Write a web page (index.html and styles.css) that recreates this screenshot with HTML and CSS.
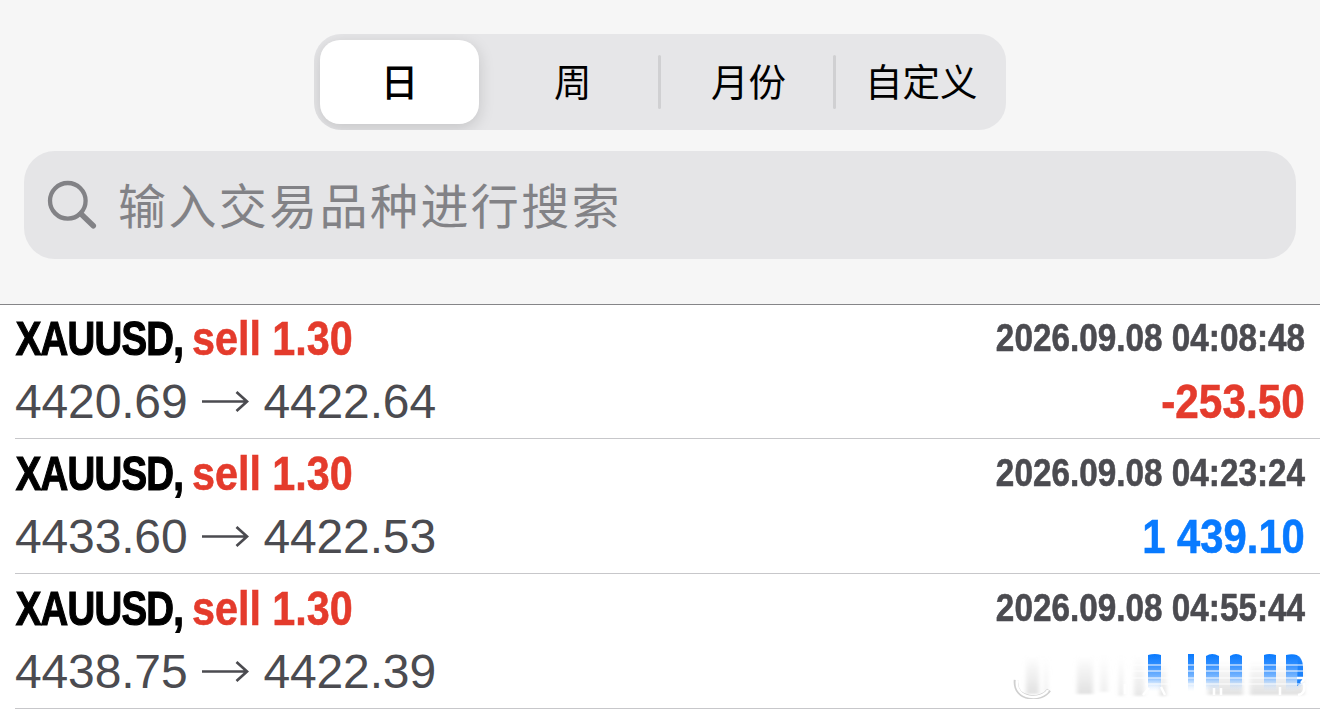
FILE: index.html
```
<!DOCTYPE html>
<html lang="zh-CN">
<head>
    <meta charset="UTF-8">
    <meta name="viewport" content="width=device-width, initial-scale=1.0">
    <title>交易历史</title>
    <link rel="stylesheet" href="styles.css">
</head>
<body>
    <header class="header">
        <div class="tabs">
            <div class="tab active">日</div>
            <div class="tab">周</div>
            <div class="separator"></div>
            <div class="tab month">月份</div>
            <div class="separator"></div>
            <div class="tab">自定义</div>
        </div>
        <div class="search">
            <svg class="search-icon" width="52" height="52" viewBox="0 0 52 52">
                <circle cx="21.8" cy="21.8" r="17.8" />
                <path class="handle" d="M34.8 34.8L47.3 46.8" />
            </svg>
            <span class="placeholder">输入交易品种进行搜索</span>
        </div>
    </header>

    <main class="deals">
        <div class="deal">
            <div class="line">
                <div class="title"><span class="symbol">XAUUSD,</span><span class="sell">sell 1.30</span></div>
                <div class="time">2026.09.08 04:08:48</div>
            </div>
            <div class="line">
                <div class="prices">
                    <span>4420.69</span>
                    <svg class="arrow" width="48" height="26" viewBox="0 0 48 26"><path d="M1 12.5H46M35.5 3L46 12.5L35.5 22" /></svg>
                    <span>4422.64</span>
                </div>
                <div class="profit loss">-253.50</div>
            </div>
        </div>
        <div class="deal">
            <div class="line">
                <div class="title"><span class="symbol">XAUUSD,</span><span class="sell">sell 1.30</span></div>
                <div class="time">2026.09.08 04:23:24</div>
            </div>
            <div class="line">
                <div class="prices">
                    <span>4433.60</span>
                    <svg class="arrow" width="48" height="26" viewBox="0 0 48 26"><path d="M1 12.5H46M35.5 3L46 12.5L35.5 22" /></svg>
                    <span>4422.53</span>
                </div>
                <div class="profit">1 439.10</div>
            </div>
        </div>
        <div class="deal">
            <div class="line">
                <div class="title"><span class="symbol">XAUUSD,</span><span class="sell">sell 1.30</span></div>
                <div class="time">2026.09.08 04:55:44</div>
            </div>
            <div class="line">
                <div class="prices">
                    <span>4438.75</span>
                    <svg class="arrow" width="48" height="26" viewBox="0 0 48 26"><path d="M1 12.5H46M35.5 3L46 12.5L35.5 22" /></svg>
                    <span>4422.39</span>
                </div>
                <!-- smudged amount -->
                <svg class="smudge" width="300" height="54" viewBox="1010 645 300 54">
                    <defs>
                        <linearGradient id="blue" gradientUnits="userSpaceOnUse" x1="0" y1="654" x2="0" y2="692">
                            <stop offset="0" stop-color="#087aff" />
                            <stop offset="0.25" stop-color="#2c8cff" />
                            <stop offset="0.6" stop-color="#78b6ff" />
                            <stop offset="1" stop-color="#e8f2fd" stop-opacity="0" />
                        </linearGradient>
                        <linearGradient id="gray" x1="0" y1="0" x2="0" y2="1">
                            <stop offset="0" stop-color="#dcdcdc" stop-opacity="0" />
                            <stop offset="1" stop-color="#dcdcdc" stop-opacity="0.85" />
                        </linearGradient>
                        <filter id="soft" x="-10%" y="-20%" width="120%" height="140%">
                            <feGaussianBlur stdDeviation="2.2 1.2" />
                        </filter>
                        <filter id="edge" x="-10%" y="-20%" width="120%" height="140%">
                            <feGaussianBlur stdDeviation="0.7" />
                        </filter>
                    </defs>
                    <g fill="url(#gray)" filter="url(#soft)">
                        <rect x="1026" y="656" width="13" height="38" />
                        <rect x="1044" y="656" width="4" height="36" opacity="0.5" />
                        <rect x="1077" y="656" width="16" height="38" />
                        <rect x="1100" y="656" width="8" height="36" opacity="0.5" />
                        <rect x="1119" y="656" width="4" height="40" opacity="0.8" />
                        <rect x="1134" y="656" width="10" height="40" opacity="0.8" />
                        <rect x="1160" y="660" width="6" height="36" />
                        <rect x="1208" y="660" width="35" height="35" />
                        <rect x="1250" y="660" width="54" height="35" />
                    </g>
                    <g fill="url(#blue)" filter="url(#edge)">
                        <path d="M1148 655Q1155 653 1161 655V693H1148Z" />
                        <path d="M1188 654H1194V693H1188Z" />
                        <path d="M1206 656Q1212 652 1219 656V693H1206Z" />
                        <path d="M1230 656Q1236 652 1242 656V693H1230Z" />
                        <path d="M1264 655Q1269 653 1276 655V693H1264Z" />
                        <path d="M1286 655Q1303 651 1303 668V682Q1302 690 1286 693Z" />
                    </g>
                    <path class="tail" filter="url(#edge)" d="M1298 658Q1303 662 1303 669V682L1297 686Z" />
                    <g class="streaks" filter="url(#edge)">
                        <path d="M1125 665H1303M1125 671H1303M1125 678H1303M1145 684H1303" />
                    </g>
                    <g class="mark" filter="url(#edge)">
                        <path class="shade" d="M1016 680C1014 701 1042 701 1049 690" />
                        <path d="M1017 680C1014 700 1042 701 1048 690M1125 694V684M1143 695L1149 688M1161 687L1165 695M1214 688V695M1221 688V695M1280 687V695M1297 678H1305L1301 683M1304 683Q1306 694 1298 695" />
                    </g>
                </svg>
            </div>
        </div>
    </main>
</body>
</html>
```

FILE: styles.css
```
* { box-sizing: border-box; }
body { margin: 0; height: 712px; overflow: hidden; background: #fff; font-family: "Liberation Sans", "Noto Sans CJK SC", sans-serif; }

.header { height: 305px; padding: 34px 24px 0; background: #f6f6f6; border-bottom: 1px solid #858588; }
.tabs { display: flex; align-items: center; width: 692px; height: 96px; margin: 0 auto; padding: 6px 0 6px 6px; background: #e6e6e8; border-radius: 27px; overflow: hidden; }
.tab { display: flex; flex: 1; align-items: center; justify-content: center; height: 84px; padding-bottom: 5px; font-family: "Noto Sans CJK SC", sans-serif; font-size: 37.5px; line-height: 50px; color: #000; }
.tab.active { flex: none; width: 159px; margin-right: 9px; background: #fff; border-radius: 20px; box-shadow: 0 4px 16px rgba(0, 0, 0, 0.15); font-weight: 500; }
.tab.month { padding-left: 3px; }
.separator { width: 3px; height: 54px; background: #d0d0d2; border-radius: 2px; }

.search { display: flex; align-items: center; height: 108px; margin-top: 21px; padding-left: 22px; background: #e5e5e7; border-radius: 31px; }
.search-icon { margin-right: 20px; fill: none; stroke: #828286; stroke-width: 4.3; stroke-linecap: round; }
.search-icon .handle { stroke-width: 5.5; }
.placeholder { padding-bottom: 4px; font-family: "Noto Sans CJK SC", sans-serif; font-size: 48px; line-height: 70px; letter-spacing: 2.4px; color: #828286; }

.deals { padding-left: 15px; }
.deal { height: 135px; padding: 3px 15px 0 0; border-bottom: 1px solid #c7c7ca; }
.deal:first-child { height: 134px; padding-top: 2px; }
.line { display: flex; align-items: center; justify-content: space-between; height: 63px; }
.title { display: flex; font-size: 48px; }
/* condensed bold */
.symbol, .sell, .time, .profit { font-weight: bold; white-space: nowrap; -webkit-text-stroke: 0.6px currentColor; }
.symbol { width: 177px; padding-left: 1px; letter-spacing: -1px; color: #000; transform: scaleX(0.8); transform-origin: left; -webkit-text-stroke-width: 1.2px; }
.sell { transform: scaleX(0.86); transform-origin: left; }
.sell, .loss { color: #e43b2c; }
.time { padding-bottom: 2px; font-size: 39px; color: #4b4b50; transform: scaleX(0.854); transform-origin: right; }
.prices { display: flex; align-items: center; font-size: 48px; letter-spacing: -0.15px; color: #4b4b50; }
.arrow { margin: 0 14px; fill: none; stroke: #4b4b50; stroke-width: 2.7; }
.profit { font-size: 48px; color: #087aff; transform: scaleX(0.87); transform-origin: right; }
.profit.loss { color: #e43b2c; transform: scaleX(0.882); }

.smudge { margin-right: -5px; }
.smudge .tail { fill: #1a82fb; }
.streaks { fill: none; stroke: #fff; stroke-width: 1.8; opacity: 0.5; }
.mark { fill: none; stroke: #fff; stroke-width: 2.5; }
.mark .shade { stroke: #d0d0d0; stroke-width: 4.5; }
```
